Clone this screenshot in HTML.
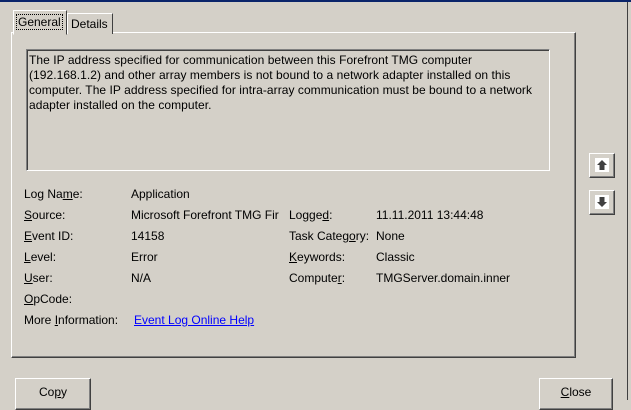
<!DOCTYPE html><html><head><style>
body{margin:0;width:631px;height:400px;background:#d4d0c8;position:relative;overflow:hidden;font-family:"Liberation Sans",sans-serif;font-size:12px;color:#000}
.a{position:absolute;white-space:nowrap}
.top{position:absolute;left:0;top:0;width:631px;height:2px;background:#0a246a}
.rb{position:absolute;left:627px;top:2px;width:1px;height:398px;background:#404040}
.panel{position:absolute;left:11px;top:32px;width:563px;height:324px;border-top:1px solid #fff;border-left:1px solid #fff;border-right:1px solid #404040;border-bottom:1px solid #404040;box-shadow:inset -1px -1px 0 #808080}
.tab{position:absolute;height:20px;border:1px solid #fff;border-right:1px solid #404040;border-bottom:none;background:#d4d0c8}
.box{position:absolute;left:26px;top:49px;width:522px;height:120px;border-top:1px solid #808080;border-left:1px solid #808080;border-right:1px solid #fff;border-bottom:1px solid #fff;box-shadow:inset 1px 1px 0 #404040}
.msg{position:absolute;left:29px;top:53px;line-height:15px;width:530px;letter-spacing:0.05px;white-space:nowrap}
.btn{position:absolute;border-top:1px solid #fff;border-left:1px solid #fff;border-right:1px solid #404040;border-bottom:1px solid #404040;box-shadow:inset -1px -1px 0 #808080;background:#d4d0c8;text-align:center}
u{text-decoration:underline}
a{color:#00f;text-decoration:underline}
</style></head><body>
<div class="top"></div><div class="rb"></div>
<div class="panel"></div>
<div class="tab" style="left:67px;top:13px;width:44px"><span class="a" style="left:3px;top:3px">Details</span></div>
<div class="tab" style="left:13px;top:10px;width:52px;height:23px;border-bottom:1px solid #d4d0c8"><span class="a" style="left:2px;top:3px;border:1px dotted #000;padding:0 1px">General</span></div>
<div class="box"></div>
<div class="msg">The IP address specified for communication between this Forefront TMG computer<br>(192.168.1.2) and other array members is not bound to a network adapter installed on this<br>computer. The IP address specified for intra-array communication must be bound to a network<br>adapter installed on the computer.</div>
<div class="btn" style="left:589px;top:153px;width:24px;height:23px"><svg width="24" height="23"><rect x="5" y="4" width="14" height="14" fill="#fff"/><path d="M12 6 L17 11 L14.5 11 L14.5 16 L9.5 16 L9.5 11 L7 11 Z" fill="#404040"/></svg></div>
<div class="btn" style="left:589px;top:190px;width:24px;height:23px"><svg width="24" height="23"><rect x="5" y="4" width="14" height="14" fill="#fff"/><path d="M12 16 L17 11 L14.5 11 L14.5 6 L9.5 6 L9.5 11 L7 11 Z" fill="#404040"/></svg></div>
<span class="a" style="left:24px;top:187px">Log Na<u>m</u>e:</span><span class="a" style="left:131px;top:187px">Application</span>
<span class="a" style="left:24px;top:208px"><u>S</u>ource:</span><span class="a" style="left:131px;top:208px">Microsoft Forefront TMG Fir</span>
<span class="a" style="left:289px;top:208px">Logge<u>d</u>:</span><span class="a" style="left:376px;top:208px">11.11.2011 13:44:48</span>
<span class="a" style="left:24px;top:229px"><u>E</u>vent ID:</span><span class="a" style="left:131px;top:229px">14158</span>
<span class="a" style="left:289px;top:229px">Task Categ<u>o</u>ry:</span><span class="a" style="left:376px;top:229px">None</span>
<span class="a" style="left:24px;top:250px"><u>L</u>evel:</span><span class="a" style="left:131px;top:250px">Error</span>
<span class="a" style="left:289px;top:250px"><u>K</u>eywords:</span><span class="a" style="left:376px;top:250px">Classic</span>
<span class="a" style="left:24px;top:271px"><u>U</u>ser:</span><span class="a" style="left:131px;top:271px">N/A</span>
<span class="a" style="left:289px;top:271px">Compute<u>r</u>:</span><span class="a" style="left:376px;top:271px">TMGServer.domain.inner</span>
<span class="a" style="left:24px;top:292px"><u>O</u>pCode:</span>
<span class="a" style="left:24px;top:313px">More <u>I</u>nformation:</span><a class="a" style="left:134px;top:313px">Event Log Online Help</a>
<div class="btn" style="left:15px;top:378px;width:74px;height:30px"><span style="position:relative;top:6px">Co<u>p</u>y</span></div>
<div class="btn" style="left:539px;top:378px;width:72px;height:30px"><span style="position:relative;top:6px"><u>C</u>lose</span></div>
</body></html>
